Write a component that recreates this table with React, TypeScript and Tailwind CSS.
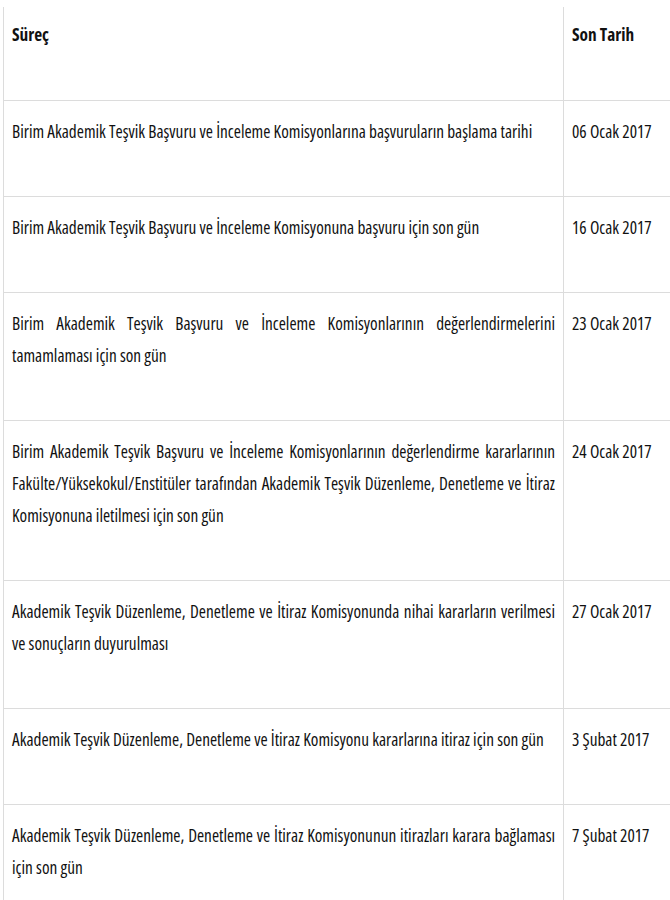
import React from 'react';

const rows: { text: string; date: string }[] = [
  { text: 'Birim Akademik Teşvik Başvuru ve İnceleme Komisyonlarına başvuruların başlama tarihi', date: '06 Ocak 2017' },
  { text: 'Birim Akademik Teşvik Başvuru ve İnceleme Komisyonuna başvuru için son gün', date: '16 Ocak 2017' },
  { text: 'Birim Akademik Teşvik Başvuru ve İnceleme Komisyonlarının değerlendirmelerini tamamlaması için son gün', date: '23 Ocak 2017' },
  {
    text: 'Birim Akademik Teşvik Başvuru ve İnceleme Komisyonlarının değerlendirme kararlarının Fakülte/Yüksekokul/Enstitüler tarafından Akademik Teşvik Düzenleme, Denetleme ve İtiraz Komisyonuna iletilmesi için son gün',
    date: '24 Ocak 2017',
  },
  { text: 'Akademik Teşvik Düzenleme, Denetleme ve İtiraz Komisyonunda nihai kararların verilmesi ve sonuçların duyurulması', date: '27 Ocak 2017' },
  { text: 'Akademik Teşvik Düzenleme, Denetleme ve İtiraz Komisyonu kararlarına itiraz için son gün', date: '3 Şubat 2017' },
  { text: 'Akademik Teşvik Düzenleme, Denetleme ve İtiraz Komisyonunun itirazları karara bağlaması için son gün', date: '7 Şubat 2017' },
];

export default function App() {
  return (
    <div className="w-[670px] overflow-hidden bg-white pt-[7px] pl-[3px] font-['Open_Sans','Liberation_Sans',Arial,sans-serif] [font-stretch:75%] text-[17.3px] leading-[32px] text-[#111]">
      <table className="w-[690px] table-fixed border-collapse border-l border-[#dcdcdc]">
        <thead>
          <tr>
            <th className="w-[560px] border-r border-b border-[#dcdcdc] px-2 pt-[12px] pb-[17px] text-left align-top font-bold">
              <p className="mb-8">Süreç</p>
            </th>
            <th className="border-r border-b border-[#dcdcdc] px-2 pt-[12px] pb-[17px] text-left align-top font-bold">
              <p className="mb-8">Son Tarih</p>
            </th>
          </tr>
        </thead>
        <tbody>
          {rows.map((r) => (
            <tr key={r.date}>
              <td className="border-r border-b border-[#dcdcdc] px-2 pt-[15px] pb-[16px] align-top text-justify">
                <p className="mb-8">{r.text}</p>
              </td>
              <td className="border-r border-b border-[#dcdcdc] px-2 pt-[15px] pb-[16px] align-top">
                <p className="mb-8">{r.date}</p>
              </td>
            </tr>
          ))}
        </tbody>
      </table>
    </div>
  );
}
